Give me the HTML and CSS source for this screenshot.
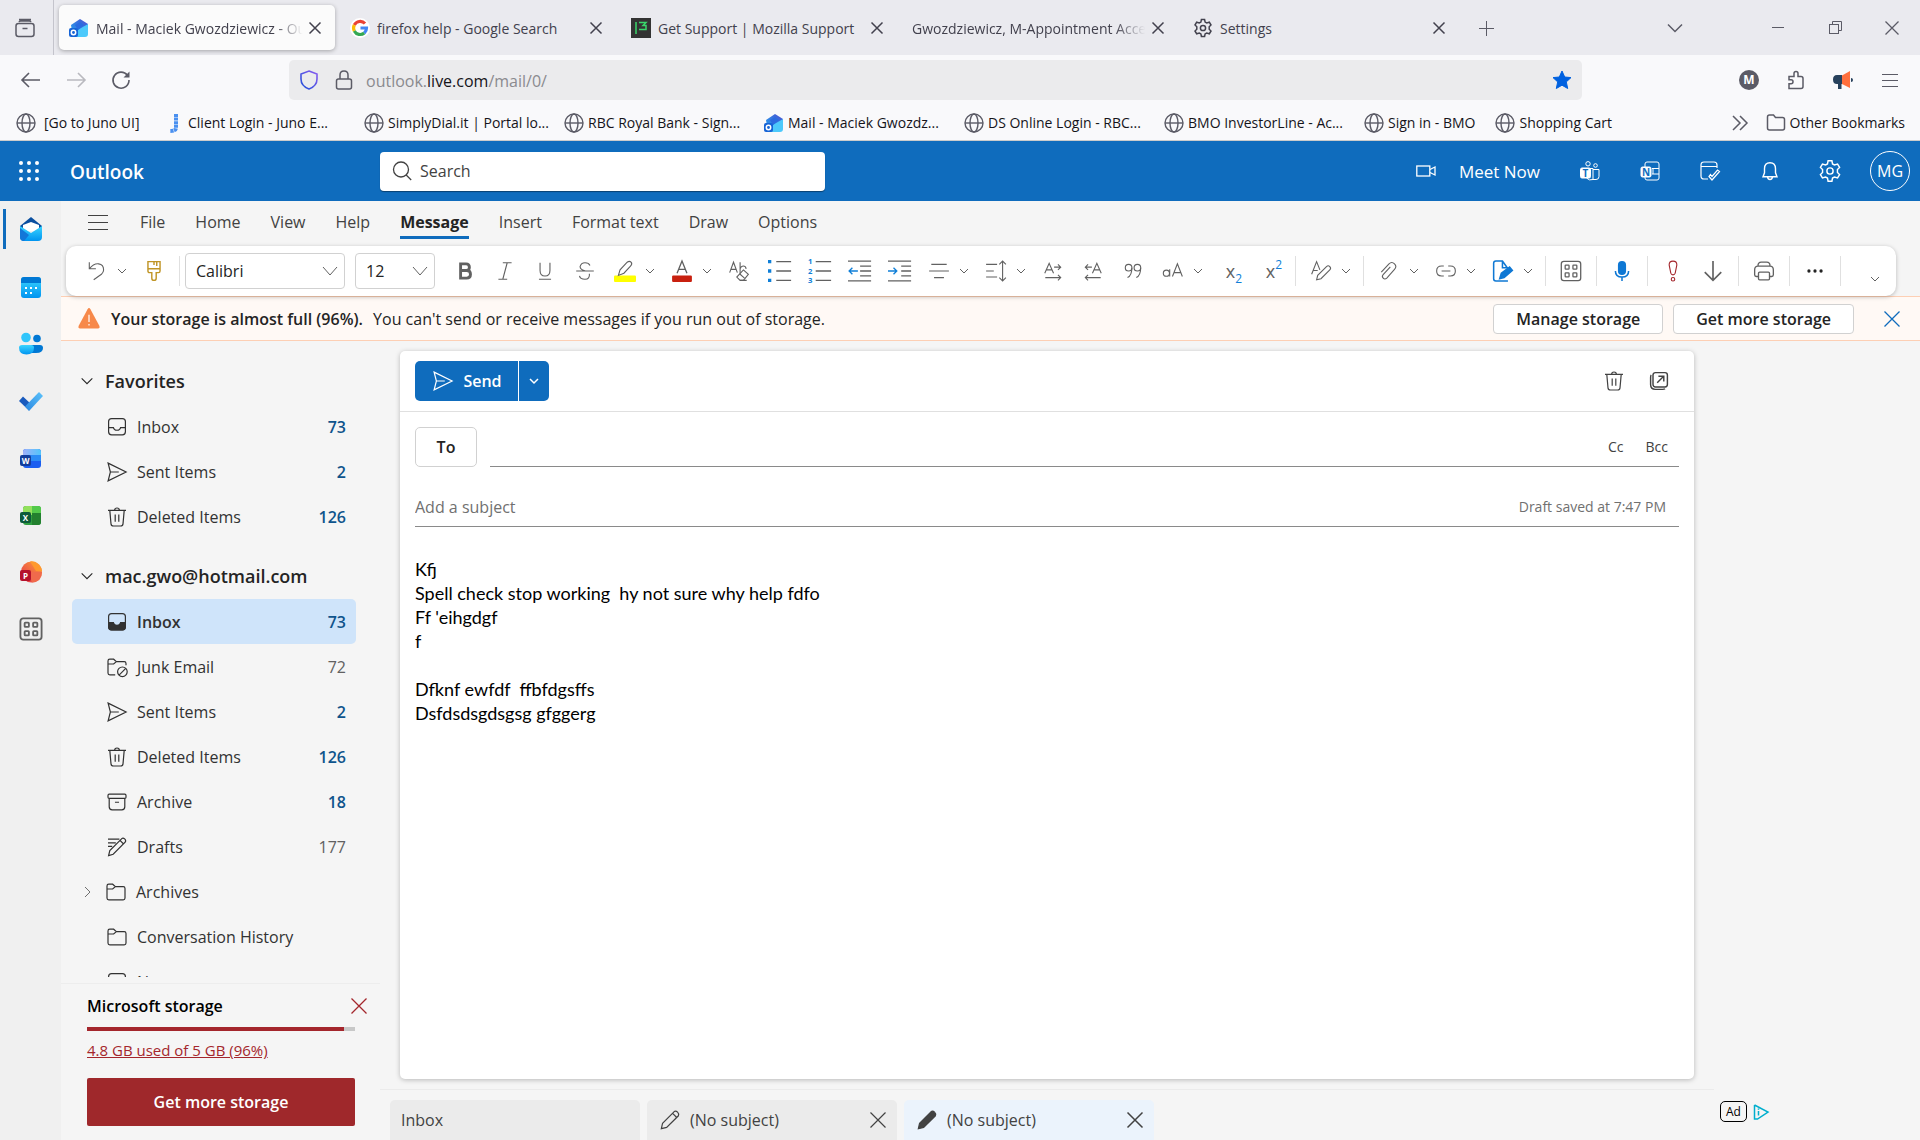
FILE: index.html
```html
<!DOCTYPE html>
<html lang="en">
<head>
    <meta charset="UTF-8">
    <meta name="viewport" content="width=device-width, initial-scale=1.0">
    <title>Mail - Maciek Gwozdziewicz - Outlook</title>
    <link rel="stylesheet" href="styles.css">
</head>
<body>
    <!-- Icon sprite -->
    <svg class="sprite" aria-hidden="true">
        <defs>
            <linearGradient id="gMail" x1="0" y1="1" x2="1" y2="0"><stop offset="0" stop-color="#1fa8f2"/><stop offset="1" stop-color="#4a4fd0"/></linearGradient>
            <linearGradient id="gCyan" x1="0" y1="0" x2="0" y2="1"><stop offset="0" stop-color="#3bd5ff"/><stop offset="1" stop-color="#0094f0"/></linearGradient>
            <linearGradient id="gWord" x1="0" y1="0" x2="1" y2="0"><stop offset="0" stop-color="#9fb0fa"/><stop offset="1" stop-color="#52c5fb"/></linearGradient>
            <linearGradient id="gTodo" x1="0" y1="1" x2="1" y2="0"><stop offset="0" stop-color="#2a87e0"/><stop offset="1" stop-color="#5cc3fb"/></linearGradient>
            <linearGradient id="gPpt" x1="0" y1="1" x2="1" y2="0"><stop offset="0" stop-color="#e2304a"/><stop offset="1" stop-color="#ffa43a"/></linearGradient>
            <linearGradient id="gShield" x1="0" y1="1" x2="1" y2="0"><stop offset="0" stop-color="#1f4fd8"/><stop offset="1" stop-color="#8a5cf0"/></linearGradient>
        </defs>
        <symbol id="chevron" viewBox="0 0 12 12"><path d="M2 4l4 4 4-4"/></symbol>
        <symbol id="close" viewBox="0 0 16 16"><path d="M2.500 2.500l11 11m0-11l-11 11"/></symbol>
        <symbol id="globe" viewBox="0 0 20 20"><circle cx="10" cy="10" r="9" stroke-width="1.400"/><ellipse cx="10" cy="10" rx="4" ry="9" stroke-width="1.400"/><path d="M1 10h18" stroke-width="1.400"/></symbol>
        <symbol id="gear" viewBox="0 0 20 20"><circle cx="10" cy="10" r="2.600"/><path d="M8.400 1.500h3.200l.5 2.600 1.600.9 2.600-.8 1.700 2.800-1.800 1.800v2.400l1.800 1.800-1.700 2.800-2.600-.8-1.600.9-.5 2.600H8.400l-.5-2.600-1.600-.9-2.600.8L2 13l1.800-1.800V8.800L2 7l1.700-2.800 2.600.8 1.600-.9z"/></symbol>
        <symbol id="mail-logo" viewBox="0 0 20 20"><path d="M2 7l9-6 8 5v9l-7 4H4z" fill="url(#gMail)" stroke="none"/><path d="M7 13l12-7v10q0 3-3 3H7z" fill="#4cc9fb" stroke="none"/><path d="M6 7l5-3 4 3-6 5z" fill="#2b6be0" stroke="none"/><rect x="0" y="10" width="9" height="9" rx="2" fill="#1664d6" stroke="none"/><circle cx="4.500" cy="14.500" r="2.200" stroke="#fff" stroke-width="1.500"/></symbol>
        <symbol id="folder" viewBox="0 0 20 20"><path d="M2.500 5q0-1.500 1.500-1.500h3.200L9.500 5.500H16q1.500 0 1.500 1.500v8q0 1.500-1.500 1.500H4q-1.500 0-1.500-1.500zM2.500 7.500h4.700l2.300-2"/></symbol>
        <symbol id="inbox" viewBox="0 0 20 20"><rect x="3" y="3" width="14" height="13.500" rx="2.500"/><path d="M3 10.500H7q.5 2.200 3 2.200T13 10.500h4"/></symbol>
        <symbol id="inbox-fill" viewBox="0 0 20 20"><rect x="3" y="3" width="14" height="13.500" rx="2.500"/><path d="M3 10.500H7q.5 2.300 3 2.300t3-2.300h4V14q0 2.500-2.500 2.500h-9q-2.500 0-2.500-2.500z" fill="currentColor"/></symbol>
        <symbol id="send" viewBox="0 0 20 20"><path d="M2.600 2.600L17.600 10l-15 7.400L4.500 10zM4.500 10h7"/></symbol>
        <symbol id="trash" viewBox="0 0 20 20"><path d="M2.500 4.500h15M8 4.500q0-2 2-2t2 2M4 4.500l1 11.200q.2 1.800 2 1.800h6q1.800 0 2-1.800l1-11.200M8.500 8v6M11.500 8v6"/></symbol>
        <symbol id="junk" viewBox="0 0 20 20"><path d="M8.500 16.500H4q-1.500 0-1.500-1.500V5q0-1.500 1.500-1.500h3.200L9.500 5.500H16q1.500 0 1.500 1.500v1.500M2.500 7.500h4.700l2.300-2"/><circle cx="14.500" cy="14" r="4"/><path d="M11.700 16.800l5.600-5.600"/></symbol>
        <symbol id="archive" viewBox="0 0 20 20"><rect x="2.500" y="3.500" width="15" height="3.500" rx="1"/><path d="M3.500 7v7q0 2.500 2.500 2.500h8q2.500 0 2.500-2.500V7M8.300 10.200h3.400"/></symbol>
        <symbol id="drafts" viewBox="0 0 20 20"><path d="M2.500 3.500h9.500M2.500 6.500H9M2.500 9.500H6M3 17.200l1-4.200L14 3q1-1 2.400.2T16.800 6l-10 10zM12.500 4.500l3 3"/></symbol>
        <symbol id="pencil" viewBox="0 0 20 20"><path d="M2.800 17.200l1-4.500L13.500 3q1.300-1 2.800.5T17 6.500L7.200 16.200zM12.200 4.500l3.400 3.400"/></symbol>
        <symbol id="apps" viewBox="1.500 1.500 17 17"><rect x="2.500" y="2.500" width="15" height="15" rx="2"/><rect x="5.500" y="5.500" width="3" height="3" rx="0.500"/><rect x="11.500" y="5.500" width="3" height="3" rx="0.500"/><rect x="5.500" y="11.500" width="3" height="3" rx="0.500"/><rect x="11.500" y="11.500" width="3" height="3" rx="0.500"/></symbol>
    </svg>

    <!-- Tab strip -->
    <header class="browser">
        <div class="tab-strip">
            <button class="strip-btn view-btn" aria-label="Recent browsing"><svg class="icon" viewBox="0 0 20 20" stroke-width="1.500"><path d="M4 1.500h12M4 4q.5-1 1.500-1h9q1 0 1.500 1"/><rect x="1" y="5.500" width="18" height="13" rx="2.500"/><path d="M7.500 10.500h5"/></svg></button>
            <div class="tabs">
                <div class="tab active"><svg class="icon"><use href="#mail-logo"/></svg><span class="tab-title fade">Mail - Maciek Gwozdziewicz - Outlook</span><button class="tab-close" aria-label="Close tab"><svg class="icon small"><use href="#close"/></svg></button></div>
                <div class="tab"><svg class="icon" viewBox="0 0 20 20" stroke-width="3.200"><circle cx="10" cy="10" r="10" fill="#fff" stroke="none"/><path d="M15 5.500A6.600 6.600 0 0 0 4.300 7" stroke="#ea4335"/><path d="M4.300 7a6.600 6.600 0 0 0 0 6" stroke="#fbbc05"/><path d="M4.300 13a6.600 6.600 0 0 0 10 2" stroke="#34a853"/><path d="M14.300 15a6.600 6.600 0 0 0 2.200-5h-6" stroke="#4285f4"/></svg><span class="tab-title">firefox help - Google Search</span><button class="tab-close" aria-label="Close tab"><svg class="icon small"><use href="#close"/></svg></button></div>
                <div class="tab"><svg class="icon" viewBox="0 0 20 20" stroke="#3ad66b" stroke-width="1.500"><rect width="20" height="20" fill="#333" stroke="none"/><path d="M5 4v12M8 4.500h7l-3 3h3v4H8"/></svg><span class="tab-title">Get Support | Mozilla Support</span><button class="tab-close" aria-label="Close tab"><svg class="icon small"><use href="#close"/></svg></button></div>
                <div class="tab"><span class="tab-title fade">Gwozdziewicz, M-Appointment Accepted</span><button class="tab-close" aria-label="Close tab"><svg class="icon small"><use href="#close"/></svg></button></div>
                <div class="tab"><svg class="icon" stroke-width="1.500"><use href="#gear"/></svg><span class="tab-title">Settings</span><button class="tab-close" aria-label="Close tab"><svg class="icon small"><use href="#close"/></svg></button></div>
            </div>
            <button class="strip-btn new-tab" aria-label="New tab"><svg class="icon small"><path d="M8.500 1v15M1 8.500h15"/></svg></button>
            <div class="window-btns">
                <button class="strip-btn list-tabs" aria-label="List all tabs"><svg class="icon" viewBox="0 0 20 20" stroke-width="1.500"><path d="M3 6.500l7 7 7-7"/></svg></button>
                <button class="strip-btn" aria-label="Minimize"><svg class="icon small"><path d="M2 7.500h12"/></svg></button>
                <button class="strip-btn" aria-label="Restore"><svg class="icon small"><rect x="2.500" y="4.500" width="9" height="9"/><path d="M5.500 4.500v-3h9v9h-3"/></svg></button>
                <button class="strip-btn" aria-label="Close"><svg class="icon small" stroke-width="1.300"><path d="M1.500 1.500l13 13m0-13l-13 13"/></svg></button>
            </div>
        </div>

        <!-- Address bar -->
        <div class="nav-bar">
            <div class="nav-btns">
                <button class="nav-btn" aria-label="Back"><svg class="icon" viewBox="0 0 20 20" stroke-width="1.600"><path d="M8 3l-7 7 7 7M1 10h18"/></svg></button>
                <button class="nav-btn dim" aria-label="Forward"><svg class="icon" viewBox="0 0 20 20" stroke-width="1.600"><path d="M12 3l7 7-7 7M19 10H1"/></svg></button>
                <button class="nav-btn" aria-label="Reload"><svg class="icon" viewBox="0 0 20 20" stroke-width="1.600"><path d="M16.500 5.500A8 8 0 1 0 18 10"/><path d="M18.500 1.500v6h-6z" fill="currentColor" stroke="none"/></svg></button>
            </div>
            <div class="url-bar">
                <svg class="icon" viewBox="0 0 20 20" stroke="url(#gShield)" stroke-width="1.600"><path d="M10 1l8 3v5q0 7-8 10Q2 16 2 9V4z"/></svg>
                <svg class="icon lock" viewBox="0 0 20 20" stroke-width="1.500"><rect x="2.500" y="9" width="15" height="10" rx="2"/><path d="M6 9V5q0-4 4-4t4 4v4"/></svg>
                <span class="url">outlook.<b>live.com</b>/mail/0/</span>
                <button class="star" aria-label="Edit bookmark"><svg class="icon" viewBox="0 0 20 20"><path d="M10 1l2.700 6 6.300.6-4.700 4.300 1.400 6.600L10 15.200l-5.700 3.300 1.400-6.600L1 7.600 7.300 7z" fill="#0061e0" stroke="#0061e0"/></svg></button>
            </div>
            <div class="extensions">
                <button class="ext-btn" aria-label="Account"><svg class="icon" viewBox="0 0 20 20"><circle cx="10" cy="10" r="10" fill="#5b5b66" stroke="none"/><text x="10" y="14" class="glyph" font-size="12">M</text></svg></button>
                <button class="ext-btn" aria-label="Extensions"><svg class="icon" viewBox="0 0 20 20" stroke-width="1.500"><path d="M3 18.500h12q2 0 2-2v-8q0-2-2-2h-3v-3q0-2-2-2t-2 2v3H3v3.300h2q2 0 2 2t-2 2H3z"/></svg></button>
                <button class="ext-btn" aria-label="Megaphone"><svg class="icon" viewBox="0 0 20 20" stroke="none"><path d="M4 5h5v9h-.5v5H5v-5H4Q0 14 0 9.500T4 5z" fill="#27415c"/><path d="M9 5.500L17 1v17l-8-4z" fill="#ff6f3d"/><path d="M18 8q2 0 2 2t-2 2z" fill="#27415c"/></svg></button>
                <button class="ext-btn" aria-label="Menu"><svg class="icon small" stroke-width="1.200"><path d="M0 2.500h16M0 8.500h16M0 14.500h16"/></svg></button>
            </div>
        </div>

        <!-- Bookmarks -->
        <nav class="bookmarks">
            <a href="#" class="bookmark first"><svg class="icon"><use href="#globe"/></svg><span>[Go to Juno UI]</span></a>
            <a href="#" class="bookmark"><svg class="icon" viewBox="0 0 20 20" stroke="#4a90f0" stroke-width="4"><path d="M12 1v14q0 3-6 3" stroke-dasharray="3 .6"/></svg><span>Client Login - Juno E...</span></a>
            <a href="#" class="bookmark"><svg class="icon"><use href="#globe"/></svg><span>SimplyDial.it | Portal lo...</span></a>
            <a href="#" class="bookmark"><svg class="icon"><use href="#globe"/></svg><span>RBC Royal Bank - Sign...</span></a>
            <a href="#" class="bookmark"><svg class="icon"><use href="#mail-logo"/></svg><span>Mail - Maciek Gwozdz...</span></a>
            <a href="#" class="bookmark"><svg class="icon"><use href="#globe"/></svg><span>DS Online Login - RBC...</span></a>
            <a href="#" class="bookmark"><svg class="icon"><use href="#globe"/></svg><span>BMO InvestorLine - Ac...</span></a>
            <a href="#" class="bookmark short"><svg class="icon"><use href="#globe"/></svg><span>Sign in - BMO</span></a>
            <a href="#" class="bookmark short"><svg class="icon"><use href="#globe"/></svg><span>Shopping Cart</span></a>
            <button class="more-marks" aria-label="More bookmarks"><svg class="icon" viewBox="0 0 20 20" stroke-width="1.500"><path d="M3 3l7 7-7 7M10 3l7 7-7 7"/></svg></button>
            <a href="#" class="bookmark other"><svg class="icon" viewBox="0 0 20 20" stroke-width="1.500"><path d="M1.500 4q0-2 2-2h4l2 2.500h7q2 0 2 2V15q0 2-2 2h-13q-2 0-2-2z"/></svg><span>Other Bookmarks</span></a>
        </nav>
    </header>

    <!-- Outlook header -->
    <div class="suite-bar">
        <button class="waffle" aria-label="App launcher"><svg class="icon" viewBox="0 0 20 20" fill="#fff" stroke="none"><circle cx="2" cy="2" r="2"/><circle cx="10" cy="2" r="2"/><circle cx="18" cy="2" r="2"/><circle cx="2" cy="10" r="2"/><circle cx="10" cy="10" r="2"/><circle cx="18" cy="10" r="2"/><circle cx="2" cy="18" r="2"/><circle cx="10" cy="18" r="2"/><circle cx="18" cy="18" r="2"/></svg></button>
        <span class="brand">Outlook</span>
        <label class="search"><svg class="icon" viewBox="0 0 20 20" stroke-width="1.300"><circle cx="9" cy="8.500" r="7.500"/><path d="M14.200 14l5 5"/></svg><input type="text" placeholder="Search" aria-label="Search"></label>
        <div class="suite-actions">
            <button class="meet"><svg class="icon" viewBox="0 0 20 20" stroke-width="1.300"><rect x="0.800" y="5" width="13" height="10"/><path d="M14 8.500L19 6v8l-5-2.500"/></svg>Meet Now</button>
            <button class="suite-btn" aria-label="Teams"><svg class="icon" viewBox="0 0 20 20"><circle cx="8" cy="2.800" r="2.200"/><circle cx="15.500" cy="4.500" r="1.800"/><path d="M10 7.500h3v11q-4 1.500-6.500-1.500M13 8.500h6v7q0 3-3 3h-3"/><rect x="0.500" y="7" width="10" height="10" rx="1.500" fill="#fff"/><text x="5.500" y="15.500" class="glyph blue" font-size="10">T</text></svg></button>
            <button class="suite-btn" aria-label="OneNote"><svg class="icon" viewBox="0 0 20 20"><path d="M5 6V3q0-2 2-2h10q2 0 2 2v14q0 2-2 2H7q-2 0-2-2v-1M12 7.500h7M12 13h7M13 13V7.500"/><rect x="1" y="6" width="10" height="10" rx="1.500" fill="#fff"/><text x="6" y="14.500" class="glyph blue" font-size="10">N</text></svg></button>
            <button class="suite-btn" aria-label="My day"><svg class="icon" viewBox="0 0 20 20" stroke-width="1.200"><path d="M8 18H4q-3 0-3-3V4q0-3 3-3h10q3 0 3 3v3M1 5.500h16M9 15.500l3 3.500 7.500-8.500-2-1.500-5.500 6.500-1.500-2z"/></svg></button>
            <button class="suite-btn" aria-label="Notifications"><svg class="icon" viewBox="0 0 20 20" stroke-width="1.400"><path d="M10 1.800q5.500 0 5.500 6v4l1.500 4H3l1.500-4v-4q0-6 5.500-6zM7.500 16q.5 2.500 2.500 2.500t2.500-2.500"/></svg></button>
            <button class="suite-btn" aria-label="Settings"><svg class="icon large" stroke-width="1.200"><use href="#gear"/></svg></button>
            <button class="avatar">MG</button>
        </div>
    </div>

    <div class="outlook">
        <!-- App rail -->
        <nav class="rail">
            <a href="#" class="rail-item current" aria-label="Mail"><svg class="icon large" viewBox="0 0 24 24" stroke="none"><path d="M1 9L12 0l11 9v4H1z" fill="#0a4fa0"/><path d="M4 8l8-3 8 3v6H4z" fill="#fff"/><path d="M1 9l11 7 11-7v11q0 4-4 4H5q-4 0-4-4z" fill="url(#gCyan)"/><path d="M1 11l9 7-5 6q-4 0-4-4z" fill="#1377d8"/></svg></a>
            <a href="#" class="rail-item" aria-label="Calendar"><svg class="icon large" viewBox="0 0 24 24" stroke="none"><rect x="2" y="2" width="20" height="21" rx="3" fill="url(#gCyan)"/><path d="M2 8V5q0-3 3-3h14q3 0 3 3v3z" fill="#0078d4"/><path d="M6 12h2v2H6zm5 0h2v2h-2zm5 0h2v2h-2zM6 17h2v2H6zm5 0h2v2h-2z" fill="#fff"/></svg></a>
            <a href="#" class="rail-item" aria-label="People"><svg class="icon large" viewBox="0 0 24 24" stroke="none"><circle cx="18" cy="6.500" r="3.800" fill="#0078d4"/><path d="M12 13h9q3 0 3 3 0 5-7 5h-5z" fill="#0078d4"/><circle cx="7" cy="5.500" r="4.800" fill="#30c5fb"/><path d="M0 15.500q0-2.500 3-2.500h9q3 0 3 2.500 0 7-7.500 7T0 15.500z" fill="url(#gCyan)"/></svg></a>
            <a href="#" class="rail-item" aria-label="To Do"><svg class="icon large" viewBox="0 0 24 24" stroke="none"><path d="M0 12l4-4.500L14 17l-4 4.500z" fill="#195abd"/><path d="M6 17.500L20 3l4 4-14 15z" fill="url(#gTodo)"/></svg></a>
            <a href="#" class="rail-item" aria-label="Word"><svg class="icon large" viewBox="0 0 24 24" stroke="none"><rect x="4" y="3" width="18" height="19" rx="3" fill="#1b5ef0"/><path d="M4 9V6q0-3 3-3h12q3 0 3 3v3z" fill="url(#gWord)"/><path d="M4 9h18v6H4z" fill="#2c8cf5"/><rect x="1" y="9" width="11" height="11" rx="2" fill="#123d9c"/><text x="6.500" y="17.500" class="glyph" font-size="8">W</text></svg></a>
            <a href="#" class="rail-item" aria-label="Excel"><svg class="icon large" viewBox="0 0 24 24" stroke="none"><rect x="4" y="3" width="18" height="19" rx="3" fill="#2f9e3f"/><path d="M4 12V6q0-3 3-3h6v9z" fill="#92e05c"/><path d="M13 3h6q3 0 3 3v6h-9z" fill="#52c94a"/><path d="M13 10h9v9q0 3-3 3h-6z" fill="#23802f"/><rect x="1" y="9" width="11" height="11" rx="2" fill="#0d5c3a"/><text x="6.500" y="17.500" class="glyph" font-size="8">X</text></svg></a>
            <a href="#" class="rail-item" aria-label="PowerPoint"><svg class="icon large" viewBox="0 0 24 24" stroke="none"><circle cx="12.500" cy="12" r="10.500" fill="url(#gPpt)"/><path d="M11 1.500a10.500 10.500 0 0 1 12 9.500h-6z" fill="#ff9a2e"/><path d="M10 12L23 12q0 10-10 10.500z" fill="#f06a4c"/><rect x="1" y="10" width="11" height="11" rx="2" fill="#b5122c"/><text x="6.500" y="18.500" class="glyph" font-size="8">P</text></svg></a>
            <a href="#" class="rail-item grey" aria-label="More apps"><svg class="icon large" stroke-width="1.300"><use href="#apps"/></svg></a>
        </nav>

        <div class="workspace">
            <!-- Ribbon -->
            <nav class="ribbon-tabs">
                <button class="hamburger" aria-label="Toggle navigation"><svg class="icon" viewBox="0 0 20 20" stroke-width="1.200"><path d="M0 3.500h20M0 10.500h20M0 17.500h20"/></svg></button>
                <button class="ribbon-tab">File</button>
                <button class="ribbon-tab">Home</button>
                <button class="ribbon-tab">View</button>
                <button class="ribbon-tab">Help</button>
                <button class="ribbon-tab selected">Message</button>
                <button class="ribbon-tab">Insert</button>
                <button class="ribbon-tab">Format text</button>
                <button class="ribbon-tab">Draw</button>
                <button class="ribbon-tab">Options</button>
            </nav>

            <div class="ribbon">
                <button class="tool split" aria-label="Undo"><svg class="icon large" viewBox="0 0 20 20"><path d="M3 2v6h6M3 8q4-5 8.500-4.500T16 9q0 2-2 4l-7 5"/></svg><svg class="icon chev"><use href="#chevron"/></svg></button>
                <button class="tool" aria-label="Format painter"><svg class="icon large" viewBox="0 0 20 20" stroke="#c09526" stroke-width="1.300"><path d="M4.500 1.500h11v8.500q0 1.500-1.500 1.500h-2v5q0 2-2 2t-2-2v-5H6q-1.500 0-1.500-1.500zM4.500 8h11M10 1.500v3M12.500 1.500v4"/></svg></button>
                <span class="divider"></span>
                <label class="picker font"><select aria-label="Font"><option>Calibri</option></select><svg class="icon" viewBox="0 0 20 20"><path d="M3 6l7 8 7-8"/></svg></label>
                <label class="picker size"><select aria-label="Font size"><option>12</option></select><svg class="icon" viewBox="0 0 20 20"><path d="M3 6l7 8 7-8"/></svg></label>
                <button class="tool bold" aria-label="Bold"><svg class="icon large" viewBox="0 0 20 20" stroke-width="2.600"><path d="M6 3.500h5q3 0 3 3t-3 3H6zM6 9.500h5.500q3.500 0 3.500 3.500t-3.500 3.500H6z"/></svg></button>
                <button class="tool" aria-label="Italic"><svg class="icon large" viewBox="0 0 20 20"><path d="M8 2.500h8M4 17.500h8M12 2.500l-4 15"/></svg></button>
                <button class="tool" aria-label="Underline"><svg class="icon large" viewBox="0 0 20 20"><path d="M5.500 2.500v7q0 5 4.500 5t4.500-5v-7M4.500 17.500h11"/></svg></button>
                <button class="tool" aria-label="Strikethrough"><svg class="icon large" viewBox="0 0 20 20"><path d="M14.500 5q-1-2.500-4.500-2.500T5.500 6q0 3 5 4M2 10h16M14 12.500q.5 5-4 5t-5-3"/></svg></button>
                <button class="tool split" aria-label="Highlight"><svg class="icon large" viewBox="0 0 20 20"><rect x="0" y="14" width="20" height="6" rx="1" fill="#ffff00" stroke="none"/><path d="M4 14l1.500-5L12 2q2-1.500 3.500 0T15 5.500L9 12l-5 2z"/></svg><svg class="icon chev"><use href="#chevron"/></svg></button>
                <button class="tool split" aria-label="Font color"><svg class="icon large" viewBox="0 0 20 20"><rect x="1" y="14" width="18" height="6" rx="1" fill="#c8200f" stroke="none"/><path d="M5.500 12L10 1l4.500 11M7 8.500h6" stroke-width="1.200"/></svg><svg class="icon chev"><use href="#chevron"/></svg></button>
                <button class="tool" aria-label="Clear formatting"><svg class="icon large" viewBox="0 0 20 20"><path d="M1.500 11.500L5 2l3.500 9.500M2.800 8.500h4.500M11 2v10M11 8q1-2.500 3-2.500T16.500 8"/><path d="M14 9l4.500 4-4.500 5.500h-3l-3-3z"/><path d="M10.500 12.500l4.500 4M11 18.500h6"/></svg></button>
                <button class="tool" aria-label="Bullets"><svg class="icon large" viewBox="0 0 20 20"><path d="M7.500 1.500H21M7.500 10H21M7.500 18.500H21" stroke-width="1.200"/><path d="M0 0h3v3H0zM0 8.500h3v3H0zM0 17h3v3H0z" fill="#0f7fd8" stroke="none"/></svg></button>
                <button class="tool" aria-label="Numbering"><svg class="icon large" viewBox="0 0 20 20"><path d="M7 1.500h14M7 10h14M7 18.500h14" stroke-width="1.200"/><text x="2" y="4" class="glyph sky" font-size="7">1</text><text x="2" y="12.500" class="glyph sky" font-size="7">2</text><text x="2" y="21" class="glyph sky" font-size="7">3</text></svg></button>
                <button class="tool" aria-label="Decrease indent"><svg class="icon large" viewBox="0 0 20 20" stroke-width="1.200"><path d="M0 1h21M11 5.500h10M11 10h10M11 14.500h10M0 19h21"/><path d="M9 10H1m3-3l-3 3 3 3" stroke="#0f7fd8"/></svg></button>
                <button class="tool" aria-label="Increase indent"><svg class="icon large" viewBox="0 0 20 20" stroke-width="1.200"><path d="M0 1h21M12 5.500h9M12 10h9M12 14.500h9M0 19h21"/><path d="M0 10h8M5 7l3 3-3 3" stroke="#0f7fd8"/></svg></button>
                <button class="tool split" aria-label="Align"><svg class="icon large" viewBox="0 0 20 20"><path d="M3 4h14M1 10h18M5.500 16h9"/></svg><svg class="icon chev"><use href="#chevron"/></svg></button>
                <button class="tool split" aria-label="Line spacing"><svg class="icon large" viewBox="0 0 20 20"><path d="M1 4h10M1 10h7M1 15.500h10M16 1v18M13 4l3-3 3 3M13 16l3 3 3-3"/></svg><svg class="icon chev"><use href="#chevron"/></svg></button>
                <button class="tool" aria-label="Left to right"><svg class="icon large" viewBox="0 0 20 20"><path d="M2.500 12L6.500 3l4 9M4 9h5M11 6.500h6m-2.500-2.500l2.500 2.500-2.500 2.500M3 16h14m-2.500-2.500L17 16l-2.500 2.500"/></svg></button>
                <button class="tool" aria-label="Right to left"><svg class="icon large" viewBox="0 0 20 20"><path d="M9.500 12l4-9 4 9M11 9h5M9 6.500H3M5.500 4L3 6.500 5.500 9M17 16H3m2.500-2.500L3 16l2.500 2.500"/></svg></button>
                <button class="tool" aria-label="Quote"><svg class="icon large" viewBox="0 0 20 20"><circle cx="6" cy="7" r="3"/><path d="M9 7q0 7-4 9"/><circle cx="14" cy="7" r="3"/><path d="M17 7q0 7-4 9"/></svg></button>
                <button class="tool split" aria-label="Change case"><svg class="icon large" viewBox="0 0 20 20"><circle cx="4" cy="12" r="2.800"/><path d="M7 8.500V15M9.500 15L14 3.500 18.500 15M11 11.500h6"/></svg><svg class="icon chev"><use href="#chevron"/></svg></button>
                <button class="tool script-btn" aria-label="Subscript">x<sub>2</sub></button>
                <button class="tool script-btn" aria-label="Superscript">x<sup>2</sup></button>
                <span class="divider"></span>
                <button class="tool split" aria-label="Styles"><svg class="icon large" viewBox="0 0 20 20"><path d="M1.500 13L6 1.500 9 9M3 9.500h4M6 18l1-4 8-8q1.500-1.500 3 0t0 3l-8 8z"/></svg><svg class="icon chev"><use href="#chevron"/></svg></button>
                <span class="divider"></span>
                <button class="tool split" aria-label="Attach file"><svg class="icon large" viewBox="0 0 20 20"><path d="M3 11l7-7.500q2.500-2.500 5 0t0 5l-7 8q-1.800 1.500-3.300 0t0-3.300l6.500-7"/></svg><svg class="icon chev"><use href="#chevron"/></svg></button>
                <button class="tool split" aria-label="Link"><svg class="icon large" viewBox="0 0 20 20"><path d="M8 5.500H6q-4.500 0-4.500 4.500T6 14.500h2M12 5.500h2q4.500 0 4.500 4.500t-4.500 4.500h-2M6 10h8"/></svg><svg class="icon chev"><use href="#chevron"/></svg></button>
                <button class="tool split" aria-label="Signature"><svg class="icon large" viewBox="0 0 20 20" stroke="#0f78d4" stroke-width="1.400"><path d="M14.500 8L9.500 1H3.500Q1.500 1 1.500 3v14Q1.500 19 3.500 19h11M9.500 1v6h5"/><path d="M7 17l1.500-5L16 6.500l2.500 3L11 16z" fill="#0f78d4"/></svg><svg class="icon chev"><use href="#chevron"/></svg></button>
                <span class="divider"></span>
                <button class="tool" aria-label="Apps"><svg class="icon large"><use href="#apps"/></svg></button>
                <span class="divider"></span>
                <button class="tool" aria-label="Dictate"><svg class="icon large" viewBox="0 0 20 20" stroke="#0f78d4" stroke-width="1.400"><rect x="7" y="1.500" width="6" height="11.500" rx="3" fill="#0f78d4"/><path d="M4 10q0 5.500 6 5.500t6-5.500M10 15.500V19"/></svg></button>
                <span class="divider"></span>
                <button class="tool" aria-label="High importance"><svg class="icon large" viewBox="0 0 20 20" stroke="#a4262c"><path d="M10 1q3.500 0 3.500 3.500L12 12q-.5 1.500-2 1.500T8 12L6.500 4.500Q6.500 1 10 1z"/><circle cx="10" cy="17.500" r="1.600"/></svg></button>
                <button class="tool" aria-label="Low importance"><svg class="icon large" viewBox="0 0 20 20" stroke-width="1.500"><path d="M10 1v17.500M2.500 11l7.500 7.500 7.500-7.500"/></svg></button>
                <span class="divider"></span>
                <button class="tool" aria-label="Print"><svg class="icon large" viewBox="0 0 20 20" stroke-width="1.200"><path d="M5 15H3q-1.500 0-1.500-1.500V9q0-3.500 3-3.500h11q3 0 3 3.500v4.500Q18.500 15 17 15h-2M4.500 5.500Q4.500 2 7.500 2h5q3 0 3 3.500"/><rect x="5" y="11" width="10" height="7" rx="1"/></svg></button>
                <span class="divider"></span>
                <button class="tool" aria-label="More"><svg class="icon large" viewBox="0 0 20 20" stroke="none" fill="#242424"><circle cx="4.500" cy="10" r="1.500"/><circle cx="10" cy="10" r="1.500"/><circle cx="15.500" cy="10" r="1.500"/></svg></button>
                <span class="divider"></span>
                <button class="tool expand" aria-label="Ribbon display options"><svg class="icon chev"><use href="#chevron"/></svg></button>
            </div>

            <!-- Storage warning -->
            <div class="banner">
                <svg class="icon large" viewBox="0 0 20 20" stroke="none"><path d="M8.800 1.800q1.200-1.800 2.400 0l7.500 14q.7 1.700-1 2.200H2.300q-1.700-.5-1-2.200z" fill="#f7894a"/><path d="M10 6.500v6M10 14.200v1.300" stroke="#fff"/></svg>
                <p class="banner-text"><strong>Your storage is almost full (96%).</strong> You can't send or receive messages if you run out of storage.</p>
                <button class="btn-outline">Manage storage</button>
                <button class="btn-outline">Get more storage</button>
                <button class="banner-close" aria-label="Dismiss"><svg class="icon small" stroke-width="1.300"><path d="M.5.500l15 15m0-15l-15 15"/></svg></button>
            </div>

            <div class="columns">
                <!-- Folders -->
                <aside class="folders">
                    <div class="folder-list">
                        <button class="group"><svg class="icon small" viewBox="0 0 12 12" stroke-width="0.800"><use href="#chevron"/></svg>Favorites</button>
                        <a href="#" class="folder"><svg class="icon large"><use href="#inbox"/></svg>Inbox<span class="count unread">73</span></a>
                        <a href="#" class="folder"><svg class="icon large"><use href="#send"/></svg>Sent Items<span class="count unread">2</span></a>
                        <a href="#" class="folder"><svg class="icon large"><use href="#trash"/></svg>Deleted Items<span class="count unread">126</span></a>
                        <button class="group account"><svg class="icon small" viewBox="0 0 12 12" stroke-width="0.800"><use href="#chevron"/></svg>mac.gwo@hotmail.com</button>
                        <a href="#" class="folder selected"><svg class="icon large"><use href="#inbox-fill"/></svg>Inbox<span class="count unread">73</span></a>
                        <a href="#" class="folder"><svg class="icon large"><use href="#junk"/></svg>Junk Email<span class="count">72</span></a>
                        <a href="#" class="folder"><svg class="icon large"><use href="#send"/></svg>Sent Items<span class="count unread">2</span></a>
                        <a href="#" class="folder"><svg class="icon large"><use href="#trash"/></svg>Deleted Items<span class="count unread">126</span></a>
                        <a href="#" class="folder"><svg class="icon large"><use href="#archive"/></svg>Archive<span class="count unread">18</span></a>
                        <a href="#" class="folder"><svg class="icon large"><use href="#drafts"/></svg>Drafts<span class="count">177</span></a>
                        <a href="#" class="folder parent"><svg class="icon chev" viewBox="0 0 12 12"><path d="M4 1l5 5-5 5"/></svg><svg class="icon large"><use href="#folder"/></svg>Archives</a>
                        <a href="#" class="folder"><svg class="icon large"><use href="#folder"/></svg>Conversation History</a>
                        <a href="#" class="folder"><svg class="icon large"><use href="#inbox"/></svg>Notes</a>
                    </div>
                    <section class="storage">
                        <div class="storage-head"><h2>Microsoft storage</h2><button class="storage-close" aria-label="Dismiss"><svg class="icon small" stroke-width="1.300"><path d="M.5.500l15 15m0-15l-15 15"/></svg></button></div>
                        <div class="meter"><div class="meter-fill" style="width: 96%"></div></div>
                        <a href="#" class="storage-link">4.8 GB used of 5 GB (96%)</a>
                        <button class="btn-red">Get more storage</button>
                    </section>
                </aside>

                <!-- Compose -->
                <main class="compose-col">
                    <section class="compose">
                        <div class="compose-bar">
                            <div class="send-group">
                                <button class="send"><svg class="icon large"><use href="#send"/></svg>Send</button>
                                <button class="send-more" aria-label="More send options"><svg class="icon chev" stroke-width="1.500"><use href="#chevron"/></svg></button>
                            </div>
                            <div class="compose-icons">
                                <button aria-label="Discard"><svg class="icon large"><use href="#trash"/></svg></button>
                                <button aria-label="Open in new window"><svg class="icon large" viewBox="0 0 20 20" stroke-width="1.200"><rect x="5" y="3" width="12" height="12" rx="2"/><path d="M3.500 5Q3 5.500 3 7v6q0 4 4 4h6q1.500 0 2-.5M8.500 11.500l5-5M9.500 6h4.500v4.500"/></svg></button>
                            </div>
                        </div>
                        <div class="to-row">
                            <button class="to-btn">To</button>
                            <div class="to-field">
                                <input type="text" aria-label="To">
                                <button class="cc">Cc</button>
                                <button class="cc">Bcc</button>
                            </div>
                        </div>
                        <div class="subject-row">
                            <input type="text" placeholder="Add a subject" aria-label="Add a subject">
                            <span class="draft-note">Draft saved at 7:47 PM</span>
                        </div>
                        <div class="message" contenteditable="true" spellcheck="false">Kfj
Spell check stop working  hy not sure why help fdfo
Ff 'eihgdgf
f

Dfknf ewfdf  ffbfdgsffs
Dsfdsdsgdsgsg gfggerg</div>
                    </section>
                    <div class="open-items">
                        <button class="open-item">Inbox</button>
                        <div class="open-item"><svg class="icon large"><use href="#pencil"/></svg><span>(No subject)</span><button aria-label="Close draft"><svg class="icon small" stroke-width="1.200"><path d="M.5.500l15 15m0-15l-15 15"/></svg></button></div>
                        <div class="open-item active"><svg class="icon large filled"><use href="#pencil"/></svg><span>(No subject)</span><button aria-label="Close draft"><svg class="icon small" stroke-width="1.500"><path d="M.5.500l15 15m0-15l-15 15"/></svg></button></div>
                    </div>
                </main>

                <aside class="ads">
                    <span class="ad-tag">Ad</span>
                    <svg class="icon small" stroke="#00aecd" stroke-width="1.500"><path d="M1.500 1v14h3L15 8 1.500 1M5.500 7v4.500M5.500 4.500v1.200"/></svg>
                </aside>
            </div>
        </div>
    </div>
</body>
</html>
```

FILE: styles.css
```css
* {
    box-sizing: border-box;
}
body {
    margin: 0;
    height: 100vh;
    display: flex;
    flex-direction: column;
    overflow: hidden;
    font-family: "Open Sans", "Noto Sans", sans-serif;
    font-size: 16px;
    color: #242424;
    background: #f5f5f5;
}
button, input, select {
    font: inherit;
    color: inherit;
    border: 0;
    padding: 0;
    background: none;
    outline: none;
}
button {
    display: flex;
    align-items: center;
    justify-content: center;
    cursor: pointer;
}
a {
    color: inherit;
    text-decoration: none;
}
.sprite {
    position: absolute;
    width: 0;
    height: 0;
}
.icon {
    width: 20px;
    height: 20px;
    flex: none;
    fill: none;
    stroke: currentColor;
    overflow: visible;
}
/* let presentation attributes on the svg win over the defaults */
.icon[stroke="none"] { stroke: none; }
.icon[fill="#fff"] { fill: #fff; }
.icon[fill="#242424"] { fill: #242424; }
.icon[stroke="#3ad66b"] { stroke: #3ad66b; }
.icon[stroke="#4a90f0"] { stroke: #4a90f0; }
.icon[stroke="#c09526"] { stroke: #c09526; }
.icon[stroke="#0f78d4"] { stroke: #0f78d4; }
.icon[stroke="#a4262c"] { stroke: #a4262c; }
.icon[stroke="#00aecd"] { stroke: #00aecd; }
.icon[stroke="url(#gShield)"] { stroke: url(#gShield); }
.icon.small {
    width: 16px;
    height: 16px;
}
.icon.large {
    width: 24px;
    height: 24px;
}
.icon.chev {
    width: 12px;
    height: 12px;
}
.icon.filled {
    fill: currentColor;
}
.glyph {
    font-family: "Open Sans", sans-serif;
    font-weight: 700;
    text-anchor: middle;
    fill: #fff;
    stroke: none;
}
.glyph.blue { fill: #0f6cbd; }
.glyph.sky { fill: #0f7fd8; }

/* Browser chrome */
.browser {
    flex: none;
    background: #f9f9fb;
    border-bottom: 1px solid #ccc;
    color: #5b5b66;
    font-size: 14px;
}
.tab-strip {
    display: flex;
    align-items: center;
    height: 55px;
    background: #eaeaef;
}
.strip-btn {
    width: 57px;
    height: 55px;
    flex: none;
}
.view-btn {
    width: 54px;
    padding-right: 4px;
    border-right: 1px solid #c4c4cc;
}
.tabs {
    display: flex;
    gap: 5px;
    margin-left: 5px;
}
.tab {
    display: flex;
    align-items: center;
    gap: 7px;
    width: 276px;
    height: 45px;
    padding: 0 12px 0 10px;
    border-radius: 5px;
    color: #42414d;
}
.tab.active {
    background: #fbfbfb;
    box-shadow: 0 1px 4px rgba(0, 0, 0, 0.3);
}
.tab-title {
    flex: 1;
    min-width: 0;
    padding-top: 2px;
    overflow: hidden;
    white-space: nowrap;
}
.tab-title.fade {
    margin-right: -7px;
    mask-image: linear-gradient(to right, #000 85%, transparent 98%);
}
.tab-close .icon {
    stroke-width: 1.5;
}
.new-tab {
    width: 54px;
}
.window-btns {
    display: flex;
    margin-left: auto;
}
.list-tabs {
    margin-right: 46px;
}
.nav-bar {
    display: flex;
    align-items: center;
    height: 50px;
}
.nav-btns {
    display: flex;
    width: 289px;
    padding-left: 8px;
}
.nav-btn {
    width: 45px;
    height: 40px;
}
.nav-btn.dim {
    opacity: 0.4;
}
.url-bar {
    display: flex;
    align-items: center;
    flex: 1;
    height: 40px;
    padding: 0 10px;
    border-radius: 5px;
    background: #ebebed;
}
.lock {
    margin: 0 12px 0 15px;
}
.url {
    flex: 1;
    padding-top: 2px;
    font-size: 16px;
    color: #8a8a8f;
}
.url b {
    font-weight: 400;
    color: #15141a;
}
.extensions {
    display: flex;
    width: 338px;
    padding-right: 7px;
    justify-content: flex-end;
}
.ext-btn {
    width: 47px;
    height: 40px;
}
.bookmarks {
    display: flex;
    align-items: center;
    height: 35px;
    padding: 0 15px 0 16px;
}
.bookmark {
    display: flex;
    align-items: center;
    gap: 4px;
    width: 200px;
    min-width: 0;
    white-space: nowrap;
}
.bookmark span {
    color: #15141a;
}
.bookmark.first {
    gap: 8px;
    width: 148px;
}
.bookmark.short, .bookmark.other {
    width: auto;
    margin-right: 20px;
}
.bookmark.other {
    margin-right: 0;
}
.more-marks {
    margin-left: auto;
    margin-right: 16px;
}

/* Outlook header */
.suite-bar {
    display: flex;
    align-items: center;
    flex: none;
    height: 60px;
    padding: 0 10px 0 19px;
    color: #fff;
    background: #0f6cbd;
}
.brand {
    width: 310px;
    margin-left: 31px;
    padding-top: 2px;
    font-size: 19px;
    font-weight: 600;
}
.search {
    display: flex;
    align-items: center;
    gap: 8px;
    width: 445px;
    height: 39px;
    padding: 0 12px;
    border-radius: 4px;
    background: #fff;
    color: #424242;
    box-shadow: 0 1px 1px rgba(0, 0, 0, 0.4);
}
.search input {
    flex: 1;
}
input::placeholder {
    color: inherit;
    opacity: 1;
}
.suite-actions {
    display: flex;
    align-items: center;
    margin-left: auto;
}
.meet {
    gap: 23px;
    margin-right: 20px;
    font-size: 17px;
}
.suite-btn {
    width: 60px;
    height: 60px;
}
.avatar {
    width: 40px;
    height: 40px;
    margin-left: 10px;
    border: 1px solid #fff;
    border-radius: 50%;
}

/* App layout */
.outlook {
    display: flex;
    flex: 1;
    min-height: 0;
}
.rail {
    width: 61px;
    flex: none;
    background: #f0f0f0;
}
.rail-item {
    display: flex;
    align-items: center;
    justify-content: center;
    height: 57px;
}
.rail-item.current {
    height: 40px;
    margin: 8px 3px 9px;
    border-right: 3px solid transparent;
    border-left: 3px solid #0f6cbd;
}
.rail-item.grey {
    color: #616161;
}
.workspace {
    display: flex;
    flex-direction: column;
    flex: 1;
    min-width: 0;
}

/* Ribbon */
.ribbon-tabs {
    display: flex;
    align-items: center;
    gap: 30px;
    flex: none;
    height: 45px;
    padding: 0 27px 4px;
    color: #424242;
}
.hamburger {
    margin-right: 2px;
}
.ribbon-tab {
    height: 34px;
    border-top: 3px solid transparent;
    border-bottom: 3px solid transparent;
}
.ribbon-tab.selected {
    font-weight: 700;
    color: #242424;
    border-bottom-color: #0f6cbd;
}
.ribbon {
    display: flex;
    align-items: center;
    flex: none;
    height: 50px;
    margin: 0 24px 0 5px;
    padding: 0 1px 0 11px;
    border-radius: 10px;
    background: #fff;
    color: #616161;
    box-shadow: 0 1px 4px rgba(0, 0, 0, 0.25);
    position: relative;
    z-index: 1;
}
.tool {
    width: 40px;
    height: 40px;
    flex: none;
}
.tool .icon.large {
    width: 22px;
    height: 22px;
}
.tool.split {
    width: 57px;
    gap: 8px;
    padding-left: 3px;
}
.divider {
    width: 1px;
    height: 30px;
    margin: 0 5px;
    flex: none;
    background: #e0e0e0;
}
.picker {
    display: grid;
    align-items: center;
    height: 36px;
    margin-right: 10px;
    border: 1px solid #d1d1d1;
    border-radius: 4px;
}
.picker select, .picker .icon {
    grid-area: 1 / 1;
}
.picker select {
    width: 100%;
    height: 34px;
    padding-left: 10px;
    appearance: none;
    color: #242424;
}
.picker .icon {
    justify-self: end;
    margin-right: 4px;
    pointer-events: none;
}
.picker.font { width: 160px; }
.picker.size { width: 80px; }
.script-btn {
    padding-left: 8px;
    font-size: 18px;
}
.script-btn sub, .script-btn sup {
    font-size: 12px;
    color: #0f7fd8;
}
.script-btn sub { padding-top: 14px; }
.script-btn sup { padding-bottom: 14px; }
.expand {
    margin-left: auto;
    align-items: flex-end;
    padding-bottom: 6px;
}

/* Storage warning */
.banner {
    display: flex;
    align-items: center;
    gap: 10px;
    flex: none;
    height: 45px;
    padding: 0 20px 0 16px;
    border-top: 1px solid #fdcfb4;
    border-bottom: 1px solid #fdcfb4;
    background: #fff9f5;
}
.banner-text {
    flex: 1;
    margin: 0;
}
.banner-text strong {
    margin-right: 6px;
    font-weight: 600;
}
.btn-outline {
    height: 30px;
    padding: 0 22px;
    border: 1px solid #d1d1d1;
    border-radius: 4px;
    background: #fff;
    font-weight: 600;
}
.banner-close {
    margin-left: 20px;
    color: #0f6cbd;
}

/* Folder pane */
.columns {
    display: flex;
    flex: 1;
    min-height: 0;
}
.folders {
    display: flex;
    flex-direction: column;
    width: 319px;
    flex: none;
}
.folder-list {
    flex: 1;
    min-height: 0;
    margin-bottom: 6px;
    padding: 17px 24px 0 11px;
    overflow: hidden;
}
.group {
    justify-content: flex-start;
    gap: 10px;
    width: 100%;
    height: 46px;
    padding-left: 7px;
    font-size: 18px;
    font-weight: 600;
}
.group.account {
    margin-top: 14px;
}
.folder {
    display: flex;
    align-items: center;
    gap: 8px;
    height: 45px;
    padding: 0 10px 0 33px;
    border-radius: 5px;
    color: #323232;
}
.folder.parent {
    padding-left: 9px;
}
.folder.parent .chev {
    margin-right: 3px;
    color: #707070;
}
.folder.selected {
    background: #cfe4fa;
    font-weight: 600;
}
.count {
    margin-left: auto;
    color: #616161;
}
.count.unread {
    font-weight: 600;
    color: #0f548c;
}
.storage {
    flex: none;
    padding: 10px 21px 14px 26px;
    border-top: 1px solid #ededed;
}
.storage-head {
    display: flex;
    align-items: center;
    justify-content: space-between;
    height: 24px;
}
.storage h2 {
    margin: 0;
    font-size: 16px;
    font-weight: 600;
    color: #000;
}
.storage-close {
    color: #a4262c;
    margin-right: -8px;
}
.meter {
    height: 4px;
    margin: 9px 4px 9px 0;
    background: #c8c8c8;
}
.meter-fill {
    height: 4px;
    background: #a4262c;
}
.storage-link {
    display: block;
    line-height: 20px;
    font-size: 15px;
    color: #a4262c;
    text-decoration: underline;
}
.btn-red {
    width: 268px;
    height: 48px;
    margin-top: 18px;
    border-radius: 2px;
    background: #9f282b;
    color: #fff;
    font-weight: 600;
}

/* Compose */
.compose-col {
    display: flex;
    flex-direction: column;
    flex: 1;
    min-width: 0;
}
.compose {
    display: flex;
    flex-direction: column;
    flex: 1;
    margin: 10px 20px;
    border-radius: 5px;
    background: #fff;
    box-shadow: 0 1px 5px rgba(0, 0, 0, 0.25);
}
.compose-bar {
    display: flex;
    align-items: center;
    justify-content: space-between;
    height: 61px;
    padding: 0 23px 0 15px;
    border-bottom: 1px solid #e0e0e0;
}
.send-group {
    display: flex;
    gap: 1px;
}
.send, .send-more {
    height: 40px;
    background: #0f6cbd;
    color: #fff;
}
.send {
    gap: 8px;
    width: 103px;
    border-radius: 5px 0 0 5px;
    font-weight: 600;
}
.send-more {
    width: 30px;
    border-radius: 0 5px 5px 0;
}
.compose-icons {
    display: flex;
    gap: 21px;
    color: #424242;
}
.to-row {
    display: flex;
    gap: 13px;
    height: 40px;
    margin: 15px 15px 0;
}
.to-btn {
    width: 62px;
    border: 1px solid #d1d1d1;
    border-radius: 5px;
    font-weight: 600;
}
.to-field {
    display: flex;
    flex: 1;
    gap: 22px;
    padding-right: 11px;
    border-bottom: 1px solid #8a8a8a;
}
.to-field input {
    flex: 1;
}
.cc {
    font-size: 14px;
    color: #424242;
}
.subject-row {
    display: flex;
    align-items: center;
    height: 40px;
    margin: 20px 15px 0;
    padding-right: 13px;
    border-bottom: 1px solid #8a8a8a;
    color: #707070;
}
.subject-row input {
    flex: 1;
}
.draft-note {
    font-size: 14px;
}
.message {
    flex: 1;
    padding: 30px 15px 0;
    font-family: Lato, "Open Sans", sans-serif;
    font-size: 18px;
    line-height: 24px;
    color: #000;
    white-space: pre-wrap;
    outline: none;
}
.open-items {
    display: flex;
    gap: 7px;
    flex: none;
    height: 51px;
    padding: 10px 10px 0;
    border-top: 1px solid #ebebeb;
}
.open-item {
    display: flex;
    align-items: center;
    justify-content: flex-start;
    gap: 8px;
    width: 250px;
    padding: 0 11px;
    border-radius: 5px 5px 0 0;
    background: #ebebeb;
    color: #424242;
}
.open-item span {
    flex: 1;
}
.open-item.active {
    background: #ebf3fc;
}
.ads {
    display: flex;
    align-items: center;
    align-self: flex-end;
    gap: 6px;
    width: 206px;
    padding: 0 6px 18px;
}
.ad-tag {
    width: 27px;
    height: 21px;
    border: 1px solid #000;
    border-radius: 5px;
    font-size: 12px;
    line-height: 19px;
    text-align: center;
    color: #000;
}
```
